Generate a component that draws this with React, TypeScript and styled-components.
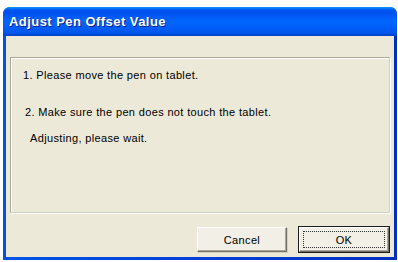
import React from "react";
import styled, { createGlobalStyle } from "styled-components";

const Global = createGlobalStyle`
  html, body { margin: 0; padding: 0; background: #ffffff; }
  body { padding: 7px 1px 0 3px; }
`;

const Window = styled.div`
  width: 394px;
  height: 253px;
  display: flex;
  flex-direction: column;
  border-radius: 7px 7px 0 0;
  background: #0a4ee0;
  overflow: hidden;
`;

const TitleBar = styled.div`
  height: 29px;
  flex: none;
  display: flex;
  align-items: center;
  padding-left: 6px;
  background: linear-gradient(
    to bottom,
    #0997ff 0px,
    #0053ee 3px,
    #0050ee 6px,
    #0066ff 14px,
    #005cf6 22px,
    #0055e9 26px,
    #0041c8 29px
  );
  color: #ffffff;
  font-family: "Liberation Sans", Arial, sans-serif;
  font-weight: bold;
  font-size: 13px;
  letter-spacing: 0.45px;
  text-shadow: 1px 1px 0 #0a1e8c;
`;

const Frame = styled.div`
  flex: 1;
  display: flex;
  padding: 0 3px 3px 3px;
  background: linear-gradient(to right, #0055e5, #0040d6 50%, #0030c0);
`;

const Client = styled.div`
  flex: 1;
  display: flex;
  flex-direction: column;
  background: #ece9d8;
  padding: 21px 4px 0 4px;
`;

const GroupBox = styled.div`
  height: 156px;
  box-sizing: border-box;
  border: 1px solid #d0d0bf;
  box-shadow: inset 1px 1px 0 #ffffff, 1px 1px 0 #ffffff;
  border-top-color: #aca899;
  border-left-color: #aca899;
  display: flex;
  flex-direction: column;
  font-family: "Liberation Sans", Arial, sans-serif;
  font-size: 11px;
  letter-spacing: 0.35px;
  color: #000000;
`;

const Line = styled.div<{ $indent: number; $top: number }>`
  padding-left: ${(p) => p.$indent}px;
  margin-top: ${(p) => p.$top}px;
  line-height: 13px;
`;

const ButtonRow = styled.div`
  display: flex;
  justify-content: flex-end;
  gap: 12px;
  margin-top: 14px;
`;

const Button = styled.button<{ $default?: boolean }>`
  width: 90px;
  height: 25px;
  box-sizing: border-box;
  position: relative;
  font-family: "Liberation Sans", Arial, sans-serif;
  font-size: 11px;
  letter-spacing: 0.35px;
  color: #000;
  background: #f1efe6;
  padding: 0;
  border: 1px solid;
  border-color: #ffffff #716f64 #716f64 #ffffff;
  box-shadow: ${(p) =>
    p.$default
      ? "0 0 0 1px #1c1c1c, inset -1px -1px 0 #aca899"
      : "inset -1px -1px 0 #aca899, 1px 1px 0 #d6d2c2"};
  ${(p) => (p.$default ? "margin-right: 1px;" : "")}
`;

const Focus = styled.span`
  position: absolute;
  inset: 3px;
  border: 1px dotted #333;
`;

export default function App() {
  return (
    <>
      <Global />
      <Window>
        <TitleBar>Adjust Pen Offset Value</TitleBar>
        <Frame>
          <Client>
            <GroupBox>
              <Line $indent={12} $top={11}>1. Please move the pen on tablet.</Line>
              <Line $indent={14} $top={24}>2. Make sure the pen does not touch the tablet.</Line>
              <Line $indent={19} $top={13}>Adjusting, please wait.</Line>
            </GroupBox>
            <ButtonRow>
              <Button>Cancel</Button>
              <Button $default>
                <Focus />
                OK
              </Button>
            </ButtonRow>
          </Client>
        </Frame>
      </Window>
    </>
  );
}
